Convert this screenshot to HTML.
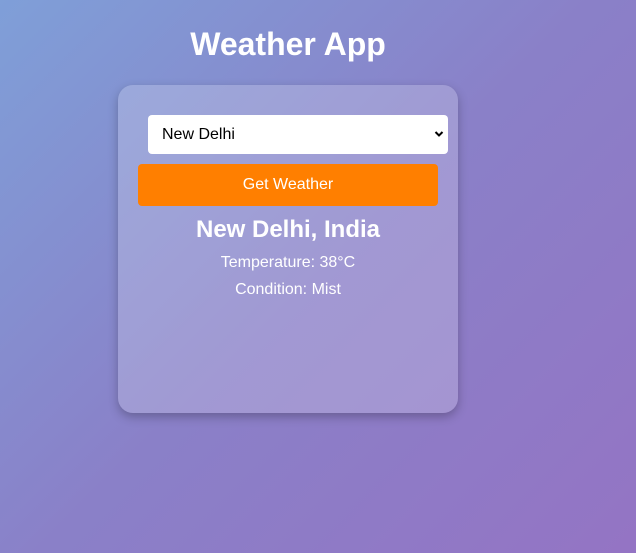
<!DOCTYPE html>
<html><head><style>
html,body{margin:0;padding:0;}
body{width:636px;height:553px;overflow:hidden;background:linear-gradient(135deg,#7f9fd8 0%,#8a80c8 50%,#9474c4 100%);font-family:"Liberation Sans",sans-serif;position:relative;}
h1{position:absolute;left:0;width:576px;top:26px;margin:0;text-align:center;color:#fff;font-size:32px;font-weight:bold;line-height:36px;}
.card{position:absolute;left:118px;top:85px;width:340px;height:328px;border-radius:15px;background:rgba(255,255,255,0.2);box-shadow:0 4px 10px rgba(0,0,0,0.25);}
.sel{position:absolute;left:30px;top:30px;width:300px;height:39px;background:#fff;border-radius:4px;font-size:16px;line-height:39px;color:#000;}
.sel span{position:absolute;left:14px;}
.sel svg{position:absolute;right:4px;top:15px;}
.btn{position:absolute;left:20px;top:79px;width:300px;height:42px;background:#ff7f00;border-radius:4px;color:#fff;font-size:16px;line-height:42px;text-align:center;}
.h{position:absolute;left:0;width:340px;top:131px;text-align:center;color:#fff;font-weight:bold;font-size:24px;line-height:28px;}
.t{position:absolute;left:0;width:340px;text-align:center;color:#fff;font-size:16px;line-height:20px;}
</style></head><body>
<h1>Weather App</h1>
<div class="card">
<div class="sel"><span>New Delhi</span><svg width="10" height="8" viewBox="0 0 10 8"><path d="M1.5 2 L5 5.5 L8.5 2" stroke="#000" stroke-width="2" fill="none"/></svg></div>
<div class="btn">Get Weather</div>
<div class="h">New Delhi, India</div>
<div class="t" style="top:168px">Temperature: 38°C</div>
<div class="t" style="top:195px">Condition: Mist</div>
</div>
</body></html>
